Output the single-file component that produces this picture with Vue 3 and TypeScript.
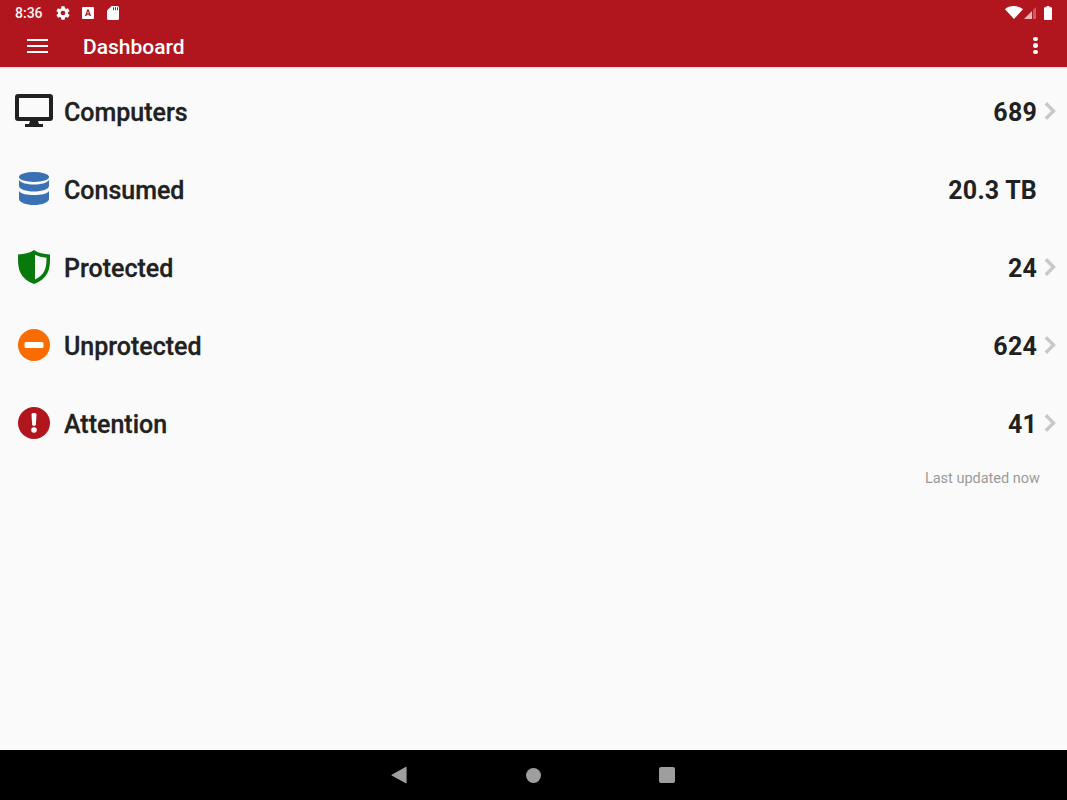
<script setup lang="ts">
interface Row {
  key: string
  label: string
  value: string
  chevron: boolean
}

const rows: Row[] = [
  { key: 'computers', label: 'Computers', value: '689', chevron: true },
  { key: 'consumed', label: 'Consumed', value: '20.3 TB', chevron: false },
  { key: 'protected', label: 'Protected', value: '24', chevron: true },
  { key: 'unprotected', label: 'Unprotected', value: '624', chevron: true },
  { key: 'attention', label: 'Attention', value: '41', chevron: true },
]
</script>

<template>
  <div class="screen">
    <div class="status-bar">
      <span class="clock">8:36</span>
      <svg class="st-gear" viewBox="0 0 24 24" width="16" height="16">
        <path fill="#fff" d="M19.4 13c.04-.3.1-.65.1-1s-.06-.7-.1-1l2.1-1.65c.2-.15.25-.42.12-.64l-2-3.46c-.12-.22-.4-.3-.6-.22l-2.5 1c-.5-.4-1.1-.73-1.7-1l-.37-2.65A.5.5 0 0 0 14 2h-4a.5.5 0 0 0-.5.42L9.13 5.07c-.6.27-1.2.6-1.7 1l-2.5-1c-.22-.08-.48 0-.6.22l-2 3.46c-.13.22-.07.49.12.64L4.55 11c-.04.3-.05.65-.05 1s.01.7.05 1l-2.1 1.65c-.2.15-.25.42-.12.64l2 3.46c.12.22.38.3.6.22l2.5-1c.5.4 1.1.73 1.7 1l.37 2.65c.05.24.25.42.5.42h4c.25 0 .45-.18.5-.42l.37-2.65c.6-.27 1.2-.6 1.7-1l2.5 1c.22.08.48 0 .6-.22l2-3.46c.13-.22.08-.49-.12-.64L19.4 13zM12 15.5a3.5 3.5 0 1 1 0-7 3.5 3.5 0 0 1 0 7z" />
      </svg>
      <svg class="st-a" viewBox="0 0 12 12" width="12" height="12">
        <path fill="#fff" fill-rule="evenodd" d="M1 0h10a1 1 0 0 1 1 1v10a1 1 0 0 1-1 1H1a1 1 0 0 1-1-1V1a1 1 0 0 1 1-1zM5.2 2.5 3 9h1.400l.4-1.300h2.400L7.600 9H9L6.800 2.500zM5.200 6.500l.8-2.400.8 2.400z" />
      </svg>
      <svg class="st-sd" viewBox="0 0 12 14" width="12" height="14">
        <path fill="#fff" fill-rule="evenodd" d="M4.500 0H10.500A1.500 1.500 0 0 1 12 1.500v11a1.500 1.500 0 0 1-1.500 1.500h-9A1.500 1.500 0 0 1 0 12.500V4.500zM6 1.200v3h1v-3zM8 1.200v3h1v-3zM10 1.200v3h1v-3z" />
      </svg>
      <span class="spacer"></span>
      <svg class="st-wifi" viewBox="0 0 18 13" width="18" height="13">
        <path fill="#fff" d="M9 13 0 3.200C2.200 1.200 5.400 0 9 0s6.800 1.200 9 3.200z" />
      </svg>
      <svg class="st-signal" viewBox="0 0 12 12" width="12" height="12">
        <path fill="#fff" fill-opacity=".7" d="M8 4v8H0z" />
        <path fill="#fff" fill-opacity=".3" d="M12 0v12H9V3z" />
      </svg>
      <svg class="st-battery" viewBox="0 0 8 14" width="8" height="14">
        <path fill="#fff" d="M2.500 0h3v1.200H7a1 1 0 0 1 1 1V13a1 1 0 0 1-1 1H1a1 1 0 0 1-1-1V2.200a1 1 0 0 1 1-1h1.500z" />
      </svg>
    </div>

    <header class="app-bar">
      <div class="menu-btn">
        <span></span><span></span><span></span>
      </div>
      <h1 class="title">Dashboard</h1>
      <div class="more-btn">
        <span></span><span></span><span></span>
      </div>
    </header>

    <main class="content">
      <div v-for="row in rows" :key="row.key" class="row">
        <div class="row-icon">
          <svg v-if="row.key === 'computers'" class="raised" viewBox="0 0 38 33" width="38" height="33">
            <path fill="#212121" fill-rule="evenodd" d="M3 0h32a3 3 0 0 1 3 3v21a3 3 0 0 1-3 3H23l1 3h4v3H10v-3h4l1-3H3a3 3 0 0 1-3-3V3a3 3 0 0 1 3-3zM4 4v19h30V4z" />
          </svg>
          <svg v-else-if="row.key === 'consumed'" class="raised" viewBox="0 0 30 33" width="30" height="33">
            <ellipse cx="15" cy="5" rx="15" ry="5" fill="#3a71b5" />
            <path fill="#3a71b5" d="M0 8c2 3 8 4.500 15 4.500S28 11 30 8v6c0 3-7 5.500-15 5.500S0 17 0 14z" />
            <path fill="#3a71b5" d="M0 19c2 3 8 4 15 4s13-1 15-4v8c0 3.300-7 6-15 6S0 30.300 0 27z" />
          </svg>
          <svg v-else-if="row.key === 'protected'" viewBox="0 0 32 34" width="32" height="34">
            <path fill="#087a0c" fill-rule="evenodd" d="M16 0C20 3 26 4 32 4.500c0 7 .2 13-2.500 18.500-2.600 5-7 8.500-13.500 11C9.500 31.500 5.100 28 2.500 23-.2 17.500 0 11.500 0 4.500 6 4 12 3 16 0zM17 4.800v24.800c4.500-2 7.600-5 9.300-8.500 1.900-3.800 2.200-8.200 2.200-13.300-4.300-.5-8.300-1.300-11.500-3z" />
          </svg>
          <svg v-else-if="row.key === 'unprotected'" viewBox="0 0 32 32" width="32" height="32">
            <circle cx="16" cy="16" r="16" fill="#fa6c00" />
            <rect x="6.500" y="13" width="19" height="6" rx="1.500" fill="#fff" />
          </svg>
          <svg v-else viewBox="0 0 32 32" width="32" height="32">
            <circle cx="16" cy="16" r="16" fill="#b1161e" />
            <path fill="#fff" d="M13.500 7.500a1.500 1.500 0 0 1 1.500-1.500h2a1.500 1.500 0 0 1 1.500 1.500l-.6 10a1.500 1.500 0 0 1-1.500 1.300h-.8a1.500 1.500 0 0 1-1.500-1.300z" />
            <circle cx="16" cy="23" r="2.800" fill="#fff" />
          </svg>
        </div>
        <span class="label">{{ row.label }}</span>
        <span class="value">{{ row.value }}</span>
        <span class="chevron-slot">
          <svg v-if="row.chevron" viewBox="0 0 12 18" width="12" height="18">
            <path d="M1.800 1.300l7.700 7.700-7.700 7.700" fill="none" stroke="#c8c8c8" stroke-width="3.400" />
          </svg>
        </span>
      </div>
      <p class="updated">Last updated now</p>
    </main>

    <footer class="nav-bar">
      <svg viewBox="0 0 16 18" width="16" height="18">
        <path fill="#9e9e9e" d="M15 .8c.3 0 .6.3.6.6v15.400c0 .5-.5.8-.9.500L.6 9.500a.5.5 0 0 1 0-.8z" />
      </svg>
      <span class="nav-home"></span>
      <span class="nav-recent"></span>
    </footer>
  </div>
</template>

<style>
html,
body {
  margin: 0;
  background: #fafafa;
}
</style>

<style scoped>
.screen {
  width: 1067px;
  height: 800px;
  display: flex;
  flex-direction: column;
  background: #fafafa;
  font-family: Roboto, 'Liberation Sans', sans-serif;
  overflow: hidden;
}

.status-bar {
  height: 25px;
  flex: none;
  display: flex;
  align-items: center;
  background: #b1161e;
  padding: 0 15px;
  color: #fff;
}

.clock {
  font-size: 14px;
  font-weight: 500;
  width: 28px;
  opacity: 0.95;
}

.st-gear {
  margin-left: 12px;
}

.st-a {
  margin-left: 11px;
}

.st-sd {
  margin-left: 13px;
}

.spacer {
  flex: 1;
}

.st-wifi {
  margin-right: 1px;
}

.st-signal {
  margin-right: 8px;
}

.app-bar {
  height: 41px;
  flex: none;
  display: flex;
  align-items: center;
  background: #b1161e;
  padding: 0 0 1px 27px;
  box-shadow: 0 1px 2px rgba(0, 0, 0, 0.15);
}

.menu-btn {
  width: 21px;
  display: flex;
  flex-direction: column;
  gap: 4px;
}

.menu-btn span {
  height: 2px;
  background: #fff;
}

.title {
  margin: 2px 0 0 35px;
  font-size: 21px;
  font-weight: 500;
  color: #fff;
  flex: 1;
}

.more-btn {
  width: 5px;
  display: flex;
  flex-direction: column;
  gap: 2px;
  margin-right: 29px;
}

.more-btn span {
  height: 4.5px;
  border-radius: 50%;
  background: #fff;
}

.content {
  flex: 1;
  padding-top: 6px;
}

.row {
  height: 78px;
  display: flex;
  align-items: center;
  padding: 0 11px 0 15px;
}

.row-icon {
  width: 38px;
  height: 38px;
  display: flex;
  align-items: center;
  justify-content: center;
  margin: 0 11px 2px 0;
  flex: none;
}

.raised {
  margin-bottom: 2px;
}

.label {
  flex: 1;
  font-size: 25px;
  font-weight: 500;
  color: #212121;
  -webkit-text-stroke: 0.3px #212121;
}

.value {
  font-size: 25px;
  font-weight: 700;
  letter-spacing: 0.2px;
  color: #212121;
}

.chevron-slot {
  width: 19px;
  height: 18px;
  margin-bottom: 2px;
  display: flex;
  justify-content: flex-end;
}

.updated {
  margin: 6px 27px 0 0;
  text-align: right;
  font-size: 14.5px;
  line-height: 20px;
  color: #9a9a9a;
}

.nav-bar {
  height: 50px;
  flex: none;
  background: #000;
  display: flex;
  align-items: center;
  padding-left: 391px;
}

.nav-home {
  width: 15px;
  height: 15px;
  border-radius: 50%;
  background: #9e9e9e;
  margin-left: 119px;
}

.nav-recent {
  width: 16px;
  height: 16px;
  border-radius: 2px;
  background: #9e9e9e;
  margin-left: 118px;
}
</style>
